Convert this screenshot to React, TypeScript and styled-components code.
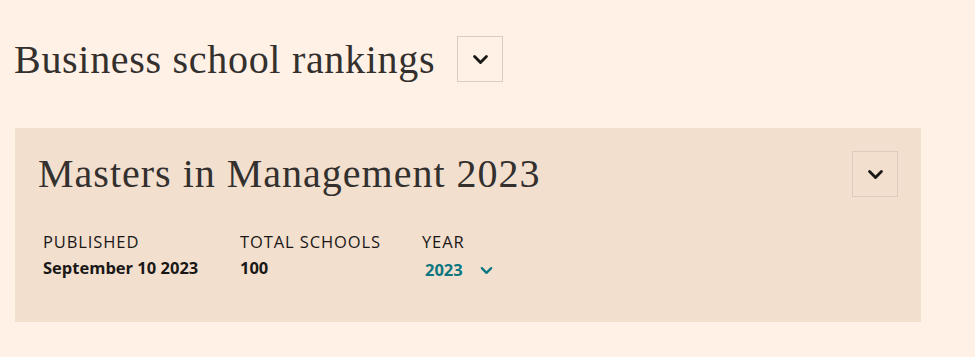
import React from 'react'
import styled, { createGlobalStyle } from 'styled-components'

const GlobalStyle = createGlobalStyle`
  body {
    margin: 0;
    background: #fff1e5;
    color: #33302e;
    font-family: 'Open Sans', 'Liberation Sans', sans-serif;
  }
`

const Chevron = ({ size = 14, color = '#1a1817' }: { size?: number; color?: string }) => (
  <svg width={size} height={size} viewBox="0 0 16 16" fill="none">
    <path d="M3 5.5 L8 10.5 L13 5.5" stroke={color} strokeWidth="2.4" strokeLinecap="round" strokeLinejoin="round" />
  </svg>
)

const meta = [
  { label: 'PUBLISHED', value: 'September 10 2023' },
  { label: 'TOTAL SCHOOLS', value: '100' },
]

export default function App() {
  return (
    <>
      <GlobalStyle />
      <S.Page>
        <S.Header>
          <S.PageTitle>Business school rankings</S.PageTitle>
          <S.IconButton aria-label="Choose ranking">
            <Chevron size={19} />
          </S.IconButton>
        </S.Header>
        <S.Panel>
          <S.PanelTop>
            <S.PanelTitle>Masters in Management 2023</S.PanelTitle>
            <S.IconButton aria-label="Choose table">
              <Chevron size={19} />
            </S.IconButton>
          </S.PanelTop>
          <S.MetaRow>
            {meta.map(m => (
              <S.MetaItem key={m.label}>
                <S.MetaLabel>{m.label}</S.MetaLabel>
                <S.MetaValue>{m.value}</S.MetaValue>
              </S.MetaItem>
            ))}
            <S.MetaItem>
              <S.MetaLabel>YEAR</S.MetaLabel>
              <S.YearSelect>
                2023
                <Chevron size={15} color="#0d7680" />
              </S.YearSelect>
            </S.MetaItem>
          </S.MetaRow>
        </S.Panel>
      </S.Page>
    </>
  )
}

export const S = {
  Page: styled.div`
    padding: 36px 54px 0 14px;
  `,
  Header: styled.div`
    display: flex;
    align-items: center;
    gap: 22px;
    margin-bottom: 46px;
  `,
  PageTitle: styled.h1`
    margin: 0;
    font-family: 'Liberation Serif', 'DejaVu Serif', serif;
    font-weight: 400;
    font-size: 40px;
    line-height: 45px;
    letter-spacing: 0.7px;
    color: #33302e;
  `,
  IconButton: styled.button`
    width: 46px;
    height: 46px;
    display: flex;
    align-items: center;
    justify-content: center;
    padding: 0;
    background: transparent;
    border: 1px solid #dcccbd;
    cursor: pointer;
  `,
  Panel: styled.section`
    margin-left: 1px;
    width: 906px;
    height: 194px;
    box-sizing: border-box;
    background: #f2dfce;
    padding: 23px 23px 0 23px;
  `,
  PanelTop: styled.div`
    display: flex;
    align-items: center;
    justify-content: space-between;
  `,
  PanelTitle: styled.h2`
    margin: 0;
    font-family: 'Liberation Serif', 'DejaVu Serif', serif;
    font-weight: 400;
    font-size: 40px;
    line-height: 46px;
    letter-spacing: 1px;
    color: #33302e;
  `,
  MetaRow: styled.div`
    display: flex;
    margin-top: 35px;
    padding-left: 5px;
  `,
  MetaItem: styled.div`
    display: flex;
    flex-direction: column;
    &:first-child { width: 197px; }
    &:nth-child(2) { width: 182px; }
  `,
  MetaLabel: styled.span`
    font-size: 16.5px;
    line-height: 20px;
    letter-spacing: 0.9px;
    color: #1a1817;
  `,
  MetaValue: styled.span`
    margin-top: 6px;
    font-size: 16.5px;
    line-height: 20px;
    font-weight: 700;
    color: #1a1817;
  `,
  YearSelect: styled.div`
    margin-top: 8px;
    padding-left: 3px;
    display: flex;
    align-items: center;
    gap: 16px;
    font-size: 16.5px;
    line-height: 20px;
    font-weight: 700;
    color: #0d7680;
  `,
}
